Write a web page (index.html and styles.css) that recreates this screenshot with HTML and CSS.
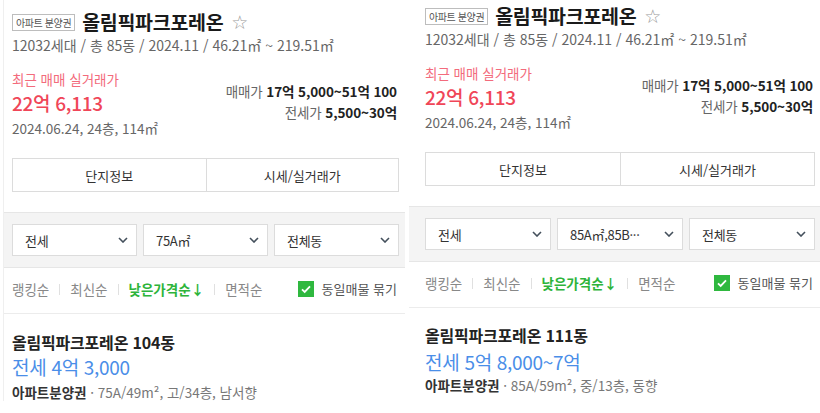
FILE: index.html
```
<!DOCTYPE html>
<html lang="ko">
<head>
<meta charset="utf-8">
<title>올림픽파크포레온</title>
<link rel="stylesheet" href="styles.css">
</head>
<body>
<div class="page">
  <section class="panel panel-a">
    <div class="head">
      <div class="title-row">
        <span class="badge">아파트 분양권</span>
        <h1 class="name">올림픽파크포레온</h1>
        <span class="star">☆</span>
      </div>
      <p class="meta">12032세대 / 총 85동 / 2024.11 / 46.21㎡ ~ 219.51㎡</p>
      <div class="price-block">
        <div class="recent">
          <p class="label">최근 매매 실거래가</p>
          <p class="price">22억 6,113</p>
          <p class="date">2024.06.24, 24층, 114㎡</p>
        </div>
        <div class="ranges">
          <p class="range">매매가 <b>17억 5,000~51억 100</b></p>
          <p class="range">전세가 <b>5,500~30억</b></p>
        </div>
      </div>
      <div class="tabs">
        <span class="tab">단지정보</span>
        <span class="tab">시세/실거래가</span>
      </div>
    </div>
    <div class="filters">
      <div class="select"><span>전세</span><svg class="chev" viewBox="0 0 10 6"><path d="M1 1l4 4 4-4"/></svg></div>
      <div class="select"><span>75A㎡</span><svg class="chev" viewBox="0 0 10 6"><path d="M1 1l4 4 4-4"/></svg></div>
      <div class="select"><span>전체동</span><svg class="chev" viewBox="0 0 10 6"><path d="M1 1l4 4 4-4"/></svg></div>
    </div>
    <div class="sort">
      <span class="opt">랭킹순</span><i class="sep"></i>
      <span class="opt">최신순</span><i class="sep"></i>
      <span class="opt on">낮은가격순↓</span><i class="sep"></i>
      <span class="opt">면적순</span>
      <span class="group"><span class="check"><svg viewBox="0 0 16 16"><path d="M4 8.3l2.7 2.6L12 5.4"/></svg></span>동일매물 묶기</span>
    </div>
    <div class="item">
      <p class="item-title">올림픽파크포레온 104동</p>
      <p class="item-price">전세 4억 3,000</p>
      <p class="item-info"><b>아파트분양권</b> · 75A/49m², 고/34층, 남서향</p>
    </div>
  </section>

  <section class="panel panel-b">
    <div class="head">
      <div class="title-row">
        <span class="badge">아파트 분양권</span>
        <h1 class="name">올림픽파크포레온</h1>
        <span class="star">☆</span>
      </div>
      <p class="meta">12032세대 / 총 85동 / 2024.11 / 46.21㎡ ~ 219.51㎡</p>
      <div class="price-block">
        <div class="recent">
          <p class="label">최근 매매 실거래가</p>
          <p class="price">22억 6,113</p>
          <p class="date">2024.06.24, 24층, 114㎡</p>
        </div>
        <div class="ranges">
          <p class="range">매매가 <b>17억 5,000~51억 100</b></p>
          <p class="range">전세가 <b>5,500~30억</b></p>
        </div>
      </div>
      <div class="tabs">
        <span class="tab">단지정보</span>
        <span class="tab">시세/실거래가</span>
      </div>
    </div>
    <div class="filters">
      <div class="select"><span>전세</span><svg class="chev" viewBox="0 0 10 6"><path d="M1 1l4 4 4-4"/></svg></div>
      <div class="select"><span>85A㎡,85B···</span><svg class="chev" viewBox="0 0 10 6"><path d="M1 1l4 4 4-4"/></svg></div>
      <div class="select"><span>전체동</span><svg class="chev" viewBox="0 0 10 6"><path d="M1 1l4 4 4-4"/></svg></div>
    </div>
    <div class="sort">
      <span class="opt">랭킹순</span><i class="sep"></i>
      <span class="opt">최신순</span><i class="sep"></i>
      <span class="opt on">낮은가격순↓</span><i class="sep"></i>
      <span class="opt">면적순</span>
      <span class="group"><span class="check"><svg viewBox="0 0 16 16"><path d="M4 8.3l2.7 2.6L12 5.4"/></svg></span>동일매물 묶기</span>
    </div>
    <div class="item">
      <p class="item-title">올림픽파크포레온 111동</p>
      <p class="item-price">전세 5억 8,000~7억</p>
      <p class="item-info"><b>아파트분양권</b> · 85A/59m², 중/13층, 동향</p>
    </div>
  </section>
</div>
</body>
</html>
```

FILE: styles.css
```
* { box-sizing: border-box; }
html, body { margin: 0; padding: 0; background: #fff; }
body {
  font-family: "Noto Sans CJK KR", "Noto Sans", sans-serif;
  color: #333;
  width: 820px;
  height: 413px;
  overflow: hidden;
}
p, h1 { margin: 0; }

.page {
  display: flex;
  gap: 4px;
  padding-left: 3px;
}

.panel { flex: none; }
.panel-a {
  width: 402px;
  border-left: 1px solid #efefef;
}
.panel-b { width: 411px; }

.head { padding: 12px 6px 20px 8px; }
.panel-b .head { padding: 6px 5px 20px 16px; }

.title-row {
  display: flex;
  align-items: center;
  height: 20px;
}
.badge {
  font-size: 10px;
  line-height: 15px;
  height: 17px;
  padding: 0 3px;
  border: 1px solid #bdbdbd;
  color: #555;
  letter-spacing: -0.4px;
}
.name {
  font-size: 19.5px;
  font-weight: 700;
  color: #1a1a1a;
  line-height: 22px;
  margin-left: 7px;
  letter-spacing: -0.3px;
}
.star {
  font-size: 19px;
  color: #999;
  margin-left: 8px;
  line-height: 20px;
  font-family: "DejaVu Sans", sans-serif;
}

.meta {
  margin-top: 4px;
  font-size: 14px;
  line-height: 19px;
  color: #666;
}

.price-block {
  margin-top: 14px;
  display: flex;
  justify-content: space-between;
}
.label {
  font-size: 13.5px;
  line-height: 20px;
  color: #f36b7c;
}
.price {
  margin-top: 2px;
  font-size: 19px;
  line-height: 24px;
  font-weight: 500;
  color: #f04658;
  letter-spacing: -0.3px;
}
.date {
  margin-top: 4px;
  font-size: 13.5px;
  line-height: 18px;
  color: #666;
}
.ranges {
  padding-top: 12px;
  text-align: right;
  padding-right: 2px;
}
.range {
  font-size: 13.5px;
  line-height: 20px;
  color: #666;
  letter-spacing: -0.1px;
}
.range + .range { margin-top: 1px; }
.range b { color: #222; font-weight: 700; }

.tabs {
  margin-top: 21px;
  display: grid;
  grid-template-columns: 1fr 1fr;
  height: 34px;
  border: 1px solid #dcdcdc;
}
.tab {
  display: flex;
  align-items: center;
  justify-content: center;
  font-size: 13px;
  color: #333;
}
.tab + .tab { border-left: 1px solid #dcdcdc; }

.filters {
  background: #f4f4f4;
  border-top: 1px solid #e6e6e6;
  border-bottom: 1px solid #e6e6e6;
  padding: 11px 6px 11px 8px;
  display: grid;
  grid-template-columns: repeat(3, 1fr);
  gap: 6px;
}
.panel-b .filters { padding: 11px 5px 11px 16px; }
.select {
  height: 32px;
  background: #fff;
  border: 1px solid #dcdcdc;
  display: flex;
  align-items: center;
  justify-content: space-between;
  padding: 0 8px 0 12px;
  font-size: 13px;
  color: #333;
  letter-spacing: -0.3px;
}
.chev {
  width: 10px;
  height: 6px;
  fill: none;
  stroke: #44505c;
  stroke-width: 1.6;
}

.sort {
  display: flex;
  align-items: center;
  padding: 11px 6px 14px 8px;
  border-bottom: 1px solid #ececec;
  font-size: 13.5px;
  line-height: 20px;
  color: #888;
}
.panel-b .sort { padding: 11px 5px 14px 16px; }
.sep {
  width: 1px;
  height: 11px;
  background: #e0e0e0;
  margin: 0 10px;
}
.opt.on { color: #2db43a; font-weight: 700; }
.group {
  margin-left: auto;
  display: flex;
  align-items: center;
  color: #555;
  font-size: 13px;
  padding-right: 2px;
}
.check {
  width: 16px;
  height: 16px;
  background: #2fb83f;
  margin-right: 8px;
  display: flex;
}
.check svg {
  width: 16px;
  height: 16px;
  fill: none;
  stroke: #fff;
  stroke-width: 1.8;
}

.item { padding: 18px 6px 0 8px; }
.panel-b .item { padding: 17px 5px 0 16px; }
.item-title {
  font-size: 16px;
  line-height: 20px;
  font-weight: 700;
  color: #222;
  letter-spacing: -0.2px;
}
.item-price {
  margin-top: 3px;
  font-size: 19px;
  line-height: 24px;
  color: #4a8ee8;
  letter-spacing: -0.3px;
}
.panel-b .item-price { margin-top: 5px; }
.item-info {
  margin-top: 4px;
  font-size: 13.5px;
  line-height: 18px;
  color: #777;
}
.panel-b .item-info { margin-top: 2px; }
.item-info b { color: #333; font-weight: 700; }
```
